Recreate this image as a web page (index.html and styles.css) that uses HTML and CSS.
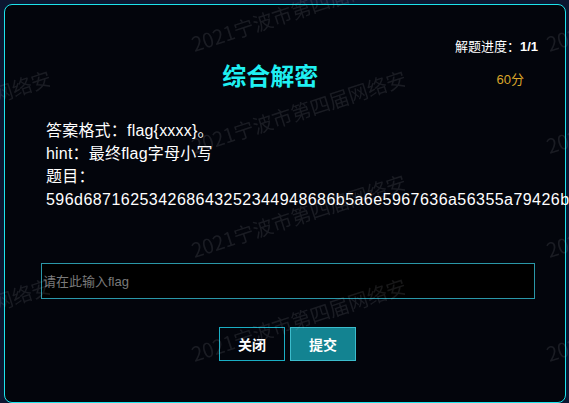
FILE: index.html
```html
<!DOCTYPE html>
<html lang="zh-CN">
<head>
<meta charset="utf-8">
<title>综合解密</title>
<link rel="stylesheet" href="styles.css">
</head>
<body>
<div class="modal">
  <div class="progress">解题进度：<b>1/1</b></div>
  <div class="title-row">
    <h2 class="title">综合解密</h2>
    <span class="score">60分</span>
  </div>
  <div class="content">
    <p>答案格式：flag{xxxx}。</p>
    <p>hint：最终flag字母小写</p>
    <p>题目：</p>
    <p class="hex">596d687162534268643252344948686b5a6e5967636a56355a79426b</p>
  </div>
  <input class="flag-input" type="text" placeholder="请在此输入flag">
  <div class="actions">
    <button class="btn btn-close">关闭</button>
    <button class="btn btn-submit">提交</button>
  </div>
</div>
<div class="watermarks">
  <div class="wm-col wm-col-left">
    <span class="wm wm-r2">2021宁波市第四届网络安全大赛</span>
    <span class="wm wm-r4">2021宁波市第四届网络安全大赛</span>
  </div>
  <div class="wm-col wm-col-mid">
    <span class="wm wm-r1">2021宁波市第四届网络安全大赛</span>
    <span class="wm wm-r2">2021宁波市第四届网络安全大赛</span>
    <span class="wm wm-r3">2021宁波市第四届网络安全大赛</span>
    <span class="wm wm-r4">2021宁波市第四届网络安全大赛</span>
  </div>
  <div class="wm-col wm-col-right">
    <span class="wm wm-r1">2021宁波市第四届网络安全大赛</span>
    <span class="wm wm-r2">2021宁波市第四届网络安全大赛</span>
    <span class="wm wm-r3">2021宁波市第四届网络安全大赛</span>
    <span class="wm wm-r4">2021宁波市第四届网络安全大赛</span>
  </div>
</div>
</body>
</html>
```

FILE: styles.css
```css
* { box-sizing: border-box; }
html, body {
  margin: 0;
  width: 569px;
  height: 403px;
  overflow: hidden;
  background: #0b1630;
  font-family: "Liberation Sans", "Noto Sans CJK SC", sans-serif;
  color: #fff;
}
.modal {
  margin: 4px 0 0 4px;
  width: 562px;
  height: 399px;
  border: 1px solid #1de3ec;
  border-radius: 8px;
  background: #03050c;
  padding: 33px 27px 0 36px;
}
.progress {
  text-align: right;
  font-size: 13px;
  line-height: 16px;
  height: 16px;
  font-family: "Noto Sans CJK SC", sans-serif;
}
.progress b { font-family: "Liberation Sans", sans-serif; font-weight: 700; }
.title-row {
  display: flex;
  margin-top: 5px;
  padding: 0 14px 0 3px;
}
.title {
  flex: 1;
  margin: 0;
  text-align: center;
  font-size: 24px;
  line-height: 32px;
  font-weight: 700;
  color: #1ff0f2;
  font-family: "Noto Sans CJK SC", sans-serif;
}
.score {
  margin-top: 13px;
  font-size: 13px;
  line-height: 16px;
  height: 16px;
  color: #dca52a;
}
.content {
  margin-top: 28px;
  padding-left: 5px;
  font-size: 16px;
  line-height: 23px;
  letter-spacing: 0.2px;
}
.content p { margin: 0; }
.content .hex { letter-spacing: 0.45px; }
.flag-input {
  display: block;
  margin-top: 52px;
  width: 494px;
  height: 36px;
  border: 1px solid #2a97a8;
  background: #000;
  color: #fff;
  padding: 0 0 0 1px;
  font-size: 13px;
  font-family: "Liberation Sans", "Noto Sans CJK SC", sans-serif;
  outline: none;
}
.flag-input::placeholder { color: #7a7a7a; }
.actions {
  display: flex;
  justify-content: center;
  gap: 5px;
  margin-top: 28px;
  padding-right: 4px;
}
.btn {
  width: 66px;
  height: 34px;
  font-size: 14px;
  font-weight: 700;
  color: #fff;
  font-family: "Noto Sans CJK SC", sans-serif;
  padding: 0;
  cursor: pointer;
}
.btn-close {
  background: transparent;
  border: 1px solid #1aaec4;
}
.btn-submit {
  background: #138391;
  border: 1px solid #3cbccc;
}
.watermarks {
  position: fixed;
  inset: 0;
  pointer-events: none;
  overflow: hidden;
}
.wm-col {
  position: absolute;
  top: 0;
  width: 355px;
  height: 403px;
  overflow: hidden;
}
.wm-col-left { left: -305px; }
.wm-col-mid { left: 50px; }
.wm-col-right { left: 405px; }
.wm {
  position: absolute;
  left: 145px;
  white-space: nowrap;
  font-size: 20px;
  line-height: 20px;
  font-family: "Noto Sans CJK SC", sans-serif;
  color: rgba(200, 200, 205, 0.12);
  transform-origin: 0 100%;
  transform: rotate(-18deg);
}
.wm-r1 { top: 34px; }
.wm-r2 { top: 136px; }
.wm-r3 { top: 240px; }
.wm-r4 { top: 344px; }
```
